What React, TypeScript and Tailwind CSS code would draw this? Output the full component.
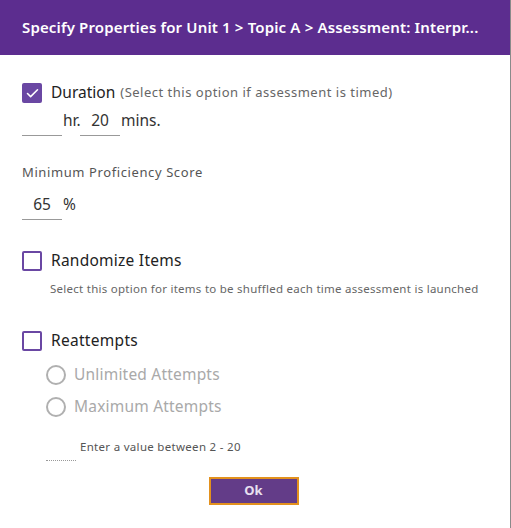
import { Check } from 'lucide-react'

// ─── Checkbox ────────────────────────────────────────────────────────────────
function Box({ checked = false }: { checked?: boolean }) {
  return checked ? (
    <span className="w-[20px] h-[20px] rounded-[2px] bg-[#6a47a3] flex items-center justify-center shrink-0">
      <Check className="w-[15px] h-[15px] text-white" strokeWidth={2.5} />
    </span>
  ) : (
    <span className="w-[20px] h-[20px] rounded-[2px] border-2 border-[#6a47a3] bg-white shrink-0" />
  )
}

function Radio({ label }: { label: string }) {
  return (
    <div className="flex items-center h-[32px] pl-[24px]">
      <span className="w-[20px] h-[20px] rounded-full border-2 border-[#b0b0b0] shrink-0" />
      <span className="ml-[8px] text-[15.5px] text-[#a9a9a9] tracking-[0.2px]">{label}</span>
    </div>
  )
}

export default function App() {
  return (
    <div className="w-[511px] h-[528px] bg-white flex font-['Noto_Sans','Lato',sans-serif]">
      <div className="w-[510px] h-full flex flex-col">
        <div className="h-[55px] bg-[#5c2d8f] flex items-center px-[22px] shrink-0">
          <span className="text-white text-[15px] font-semibold whitespace-nowrap tracking-[0.15px]">
            Specify Properties for Unit 1 &gt; Topic A &gt; Assessment: Interpr...
          </span>
        </div>

        <div className="flex flex-col px-[22px] pt-[28px]">
          <div className="flex items-center h-[20px]">
            <Box checked />
            <span className="ml-[9px] text-[15.5px] text-[#222]">Duration</span>
            <span className="ml-[5px] text-[13px] text-[#666] tracking-[0.5px]">(Select this option if assessment is timed)</span>
          </div>

          <div className="flex items-start mt-[4px] text-[15.5px] text-[#333] leading-[26px]">
            <span className="w-[40px] h-[29px] border-b border-[#999]" />
            <span className="w-[18px] pl-[1px]">hr.</span>
            <span className="w-[40px] h-[29px] border-b border-[#999] text-center">20</span>
            <span className="ml-[1px]">mins.</span>
          </div>

          <div className="mt-[27px] text-[13px] text-[#555] h-[18px] leading-[18px] tracking-[0.6px]">Minimum Proficiency Score</div>

          <div className="flex items-start mt-[10px] text-[15.5px] text-[#333] leading-[26px]">
            <span className="w-[40px] h-[29px] border-b border-[#999] text-center">65</span>
            <span className="ml-[1px]">%</span>
          </div>

          <div className="flex items-center h-[20px] mt-[31px]">
            <Box />
            <span className="ml-[9px] text-[15.5px] text-[#222] tracking-[0.25px]">Randomize Items</span>
          </div>
          <div className="pl-[28px] mt-[10px] text-[11.5px] text-[#666] h-[16px] leading-[16px] tracking-[0.26px]">
            Select this option for items to be shuffled each time assessment is launched
          </div>

          <div className="flex items-center h-[20px] mt-[34px]">
            <Box />
            <span className="ml-[9px] text-[15.5px] text-[#222] tracking-[0.3px]">Reattempts</span>
          </div>
          <div className="mt-[8px]">
            <Radio label="Unlimited Attempts" />
            <Radio label="Maximum Attempts" />
          </div>
          <div className="pl-[58px] mt-[16px] text-[11.5px] text-[#555] h-[16px] leading-[16px] tracking-[0.3px]">
            Enter a value between 2 - 20
          </div>
          <div className="ml-[24px] mt-[5px] w-[30px] border-b border-dotted border-[#999]" />

          <div className="flex justify-center mt-[16px] pr-[3px]">
            <button className="w-[90px] h-[28px] bg-[#633c88] border-2 border-[#e3911d] text-[#e8e0f0] text-[13px] font-bold">
              Ok
            </button>
          </div>
        </div>
      </div>
      <div className="w-px h-full bg-[#8a8a8a]" />
    </div>
  )
}
